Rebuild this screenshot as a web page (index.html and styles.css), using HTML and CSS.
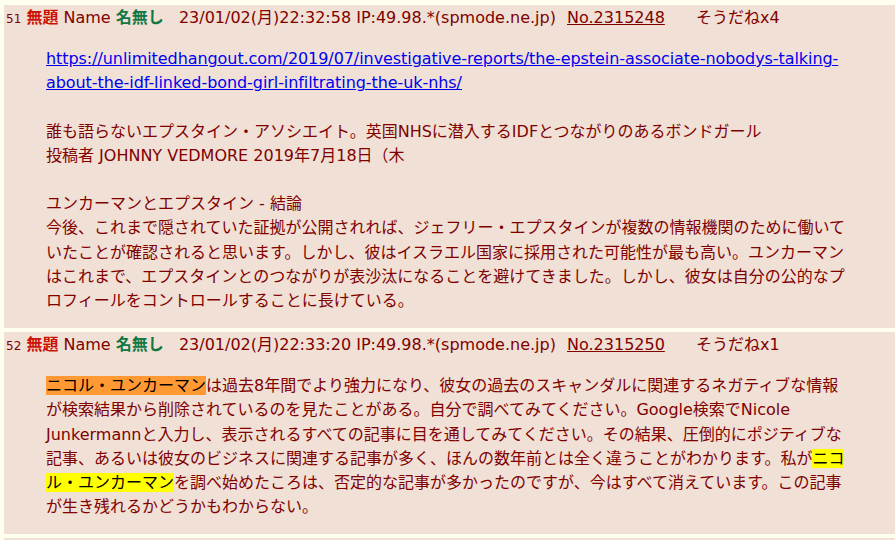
FILE: index.html
```html
<!DOCTYPE html>
<html lang="ja">
    <head>
        <meta charset="UTF-8" />
        <meta name="viewport" content="width=device-width, initial-scale=1.0" />
        <title>スレッド</title>
        <link rel="stylesheet" href="styles.css">
    </head>
    <body>
        <div class="thread">
            <div class="post">
                <div class="post-head">
                    <span class="rsc">51</span>
                    <span class="csb">無題</span>
                    Name <span class="cnm">名無し</span>
                    <span class="cnw">23/01/02(月)22:32:58 IP:49.98.*(spmode.ne.jp)</span>
                    <a class="cno" href="#">No.2315248</a>
                    <a class="sod" href="#">そうだねx4</a>
                </div>
                <blockquote>
                    <a class="url" href="#">https://unlimitedhangout.com/2019/07/investigative-reports/the-epstein-associate-nobodys-talking-about-the-idf-linked-bond-girl-infiltrating-the-uk-nhs/</a><br>
                    <br>
                    誰も語らないエプスタイン・アソシエイト。英国NHSに潜入するIDFとつながりのあるボンドガール<br>
                    投稿者 JOHNNY VEDMORE 2019年7月18日（木<br>
                    <br>
                    ユンカーマンとエプスタイン - 結論<br>
                    今後、これまで隠されていた証拠が公開されれば、ジェフリー・エプスタインが複数の情報機関のために働いていたことが確認されると思います。しかし、彼はイスラエル国家に採用された可能性が最も高い。ユンカーマンはこれまで、エプスタインとのつながりが表沙汰になることを避けてきました。しかし、彼女は自分の公的なプロフィールをコントロールすることに長けている。
                </blockquote>
            </div>
            <div class="post">
                <div class="post-head">
                    <span class="rsc">52</span>
                    <span class="csb">無題</span>
                    Name <span class="cnm">名無し</span>
                    <span class="cnw">23/01/02(月)22:33:20 IP:49.98.*(spmode.ne.jp)</span>
                    <a class="cno" href="#">No.2315250</a>
                    <a class="sod" href="#">そうだねx1</a>
                </div>
                <blockquote>
                    <span class="hl-orange">ニコル・ユンカーマン</span>は過去8年間でより強力になり、彼女の過去のスキャンダルに関連するネガティブな情報が検索結果から削除されているのを見たことがある。自分で調べてみてください。Google検索でNicole Junkermannと入力し、表示されるすべての記事に目を通してみてください。その結果、圧倒的にポジティブな記事、あるいは彼女のビジネスに関連する記事が多く、ほんの数年前とは全く違うことがわかります。私が<span class="hl-yellow">ニコル・ユンカーマン</span>を調べ始めたころは、否定的な記事が多かったのですが、今はすべて消えています。この記事が生き残れるかどうかもわからない。
                </blockquote>
            </div>
            <div class="post post-next"></div>
        </div>
    </body>
</html>
```

FILE: styles.css
```css
body {
    margin: 0;
    background-color: #ffffee;
    color: #800000;
    font-family: "DejaVu Sans", "Noto Sans CJK JP", sans-serif;
    font-size: 16px;
    overflow: hidden;
}

.thread {
    display: flex;
    flex-direction: column;
    gap: 4px;
    padding: 5px 0 0 4px;
}

.post {
    background-color: #f0e0d6;
    padding: 2px 0 15px 2px;
}

.post-head {
    line-height: 22px;
    white-space: nowrap;
}

.rsc {
    font-size: 12px;
}

.csb {
    color: #cc1105;
    font-weight: bold;
}

.cnm {
    color: #117743;
    font-weight: bold;
    margin-right: 10px;
}

.cno {
    color: #800000;
    margin-left: 6px;
}

.sod {
    color: #800000;
    text-decoration: none;
    margin-left: 26px;
}

blockquote {
    margin: 17px 0 0 40px;
    width: 802px;
    line-height: 24.2px;
}

.url {
    color: #0000ee;
    letter-spacing: -0.07px;
}

.hl-orange {
    background-color: #ff9933;
    color: #000000;
}

.hl-yellow {
    background-color: #ffff00;
    color: #000000;
}

.post-next {
    height: 30px;
    padding: 0;
}
```
